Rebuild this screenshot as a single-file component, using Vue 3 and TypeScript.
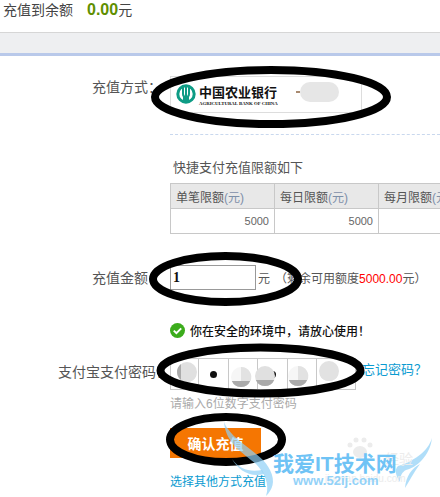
<template>
  <div class="page">
    <div class="balance">
      <span>充值到余额</span>
      <b class="balance-num">0.00</b><span>元</span>
    </div>
    <div class="band"></div>

    <div class="form">
      <div class="row bank-row">
        <span class="label">充值方式：</span>
        <div class="bank-box">
          <svg class="bank-logo" width="20" height="20" viewBox="0 0 20 20">
            <circle cx="10" cy="10" r="8.2" fill="none" stroke="#0e9c85" stroke-width="3" />
            <path d="M7 3v7a3 3 0 0 0 6 0V3M10 2v16" fill="none" stroke="#0e9c85" stroke-width="2" />
            <rect x="7" y="13" width="6" height="4" fill="#0e9c85" />
          </svg>
          <div class="bank-name">
            <div class="bank-cn">中国农业银行</div>
            <div class="bank-en">AGRICULTURAL BANK OF CHINA</div>
          </div>
        </div>
      </div>

      <div class="indent">
        <div class="dashed"></div>
        <div class="tip">快捷支付充值限额如下</div>
        <table class="limits">
          <thead>
            <tr>
              <th v-for="name in limitNames" :key="name">{{ name }}<i>(元)</i></th>
            </tr>
          </thead>
          <tbody>
            <tr>
              <td>5000</td>
              <td>5000</td>
              <td></td>
            </tr>
          </tbody>
        </table>
      </div>

      <div class="row amount-row">
        <span class="label">充值金额：</span>
        <input class="amount" type="text" value="1" />
        <span class="unit">元</span>
        <span class="remain">（剩余可用额度<em>5000.00</em>元）</span>
      </div>

      <div class="indent safe">
        <svg width="15" height="15" viewBox="0 0 15 15">
          <circle cx="7.5" cy="7.5" r="7.5" fill="#3cac1c" />
          <path d="M3.8 7.6l2.6 2.6 4.8-4.8" fill="none" stroke="#fff" stroke-width="2" />
        </svg>
        <span>你在安全的环境中，请放心使用！</span>
      </div>

      <div class="row pin-row">
        <span class="label label-pin">支付宝支付密码：</span>
        <div class="pin">
          <div v-for="n in 6" :key="n" class="pin-cell"><i v-if="n < 6"></i></div>
        </div>
        <a class="forgot">忘记密码？</a>
      </div>

      <div class="indent">
        <div class="hint">请输入6位数字支付密码</div>
        <button class="submit" type="button">确认充值</button>
        <a class="other">选择其他方式充值</a>
      </div>
    </div>

    <!-- hand-drawn marks and censoring over the screenshot -->
    <svg class="marks" width="440" height="497" viewBox="0 0 440 497">
      <rect x="300" y="82" width="39" height="20" rx="10" fill="#e6e6e6" />
      <rect x="296" y="91" width="4" height="2" fill="#a98a70" />
      <g v-for="b in blobs" :key="b.x">
        <circle :cx="b.x" :cy="b.y" r="10" :fill="b.top" />
        <path :d="`M${b.x - 9.2} ${b.y + 4}A10 10 0 0 0 ${b.x + 9.2} ${b.y + 4}Z`" :fill="b.bottom" />
      </g>
      <path d="M177 372a10 10 0 0 1 4-8v16a10 10 0 0 1-4-8z" fill="#aaa" />
      <path d="M241 367a10 10 0 0 1 9.5 14h-9.5z" fill="#e2e2e2" />
      <path d="M298 366a10 10 0 0 1 9.5 14h-9.5z" fill="#e2e2e2" />
      <ellipse class="ring" cx="271" cy="97" rx="116" ry="27" />
      <ellipse class="ring" cx="225.5" cy="279" rx="72.5" ry="23" />
      <ellipse class="ring" cx="260.5" cy="370.5" rx="100" ry="23" />
      <ellipse class="ring" cx="226" cy="439.5" rx="56" ry="22.5" />
      <g class="wing">
        <path d="M224 422C232 442 262 452 270 470C276 482 272 490 266 496C270 484 264 472 256 464C242 452 226 444 224 422Z" />
        <path d="M232 459C240 470 250 472 262 470L264 474C250 478 238 470 232 459Z" />
        <path d="M432 438C428 452 412 462 398 466C394 470 396 476 400 482C400 476 402 472 406 470C416 468 430 456 432 438Z" />
        <path d="M420 464C412 468 406 476 405 488C410 480 414 472 420 464Z" />
      </g>
      <g class="paw">
        <ellipse cx="360" cy="452" rx="7" ry="6" />
        <circle cx="350" cy="445" r="2.5" />
        <circle cx="356" cy="440" r="2.5" />
        <circle cx="364" cy="440" r="2.5" />
        <circle cx="370" cy="445" r="2.5" />
      </g>
    </svg>
    <div class="wm-baidu">经验</div>
    <div class="wm-baidu-url">jingyan.baidu.com</div>
    <div class="wm-title">我爱IT技术网</div>
    <div class="wm-url">www.52ij.com</div>
  </div>
</template>

<script setup lang="ts">
interface Blob {
  x: number;
  y: number;
  top: string;
  bottom: string;
}

const limitNames: string[] = ['单笔限额', '每日限额', '每月限额'];

const blobs: Blob[] = [
  { x: 187, y: 372, top: '#e0e0e0', bottom: '#e0e0e0' },
  { x: 241, y: 377, top: '#f6f6f6', bottom: '#aaaaaa' },
  { x: 265, y: 376, top: '#e0e0e0', bottom: '#aaaaaa' },
  { x: 298, y: 376, top: '#f6f6f6', bottom: '#aaaaaa' },
  { x: 329, y: 371, top: '#e2e2e2', bottom: '#e2e2e2' }
];
</script>

<style>
html,
body {
  margin: 0;
  background: #fff;
  overflow: hidden;
}
</style>

<style scoped>
.page {
  position: relative;
  width: 440px;
  height: 497px;
  overflow: hidden;
  background: #fff;
  color: #555;
  font-family: "Liberation Sans", "Noto Sans CJK SC", sans-serif;
  font-size: 14px;
}

.balance {
  height: 32px;
  padding-left: 3px;
  line-height: 20px;
  color: #444;
}

.balance-num {
  margin-left: 14px;
  font-size: 16px;
  color: #5f8f00;
}

.band {
  height: 20px;
  background: #eeeff1;
  border-top: 1px solid #d6d6d6;
  border-bottom: 3px solid #b9c9ea;
}

.row {
  display: flex;
  align-items: flex-start;
}

.label {
  flex: none;
  width: 162px;
  margin-right: 8px;
  text-align: right;
  line-height: 22px;
  color: #555;
}

.label-pin {
  width: 170px;
  margin-right: 0;
}

.indent {
  padding-left: 170px;
}

.bank-row {
  padding-top: 20px;
}

.bank-box {
  box-sizing: border-box;
  display: flex;
  align-items: flex-start;
  width: 192px;
  height: 37px;
  padding: 7px 0 0 5px;
  border: 1px solid #ddd;
}

.bank-logo {
  flex: none;
}

.bank-name {
  margin-left: 3px;
  color: #111;
}

.bank-cn {
  font-family: "Noto Sans CJK SC", sans-serif;
  font-size: 13px;
  font-weight: 700;
  line-height: 16px;
}

.bank-en {
  font-family: "Liberation Serif", serif;
  font-size: 4.8px;
  font-weight: 700;
  line-height: 8px;
  white-space: nowrap;
}

.dashed {
  margin-top: 21px;
  border-top: 1px dashed #c9d8ee;
}

.tip {
  margin: 24px 0 7px 3px;
  font-size: 13px;
  line-height: 17px;
  color: #555;
}

.limits {
  table-layout: fixed;
  width: 310px;
  border-collapse: collapse;
  font-size: 12px;
}

.limits th,
.limits td {
  box-sizing: border-box;
  width: 104px;
  height: 25px;
  border: 1px solid #c8c8c8;
  white-space: nowrap;
  overflow: hidden;
}

.limits th {
  padding: 0 0 0 5px;
  background: #e8e8e8;
  font-weight: 400;
  text-align: left;
  color: #555;
}

.limits th i {
  font-style: normal;
  color: #7d8fa8;
}

.limits td {
  padding: 0 5px 0 0;
  font-size: 11px;
  text-align: right;
  color: #666;
}

.amount-row {
  margin-top: 31px;
  align-items: center;
}

.amount {
  box-sizing: border-box;
  width: 86px;
  height: 25px;
  padding: 0 2px;
  border: 1px solid #999;
  outline: none;
  font-family: "Liberation Serif", serif;
  font-size: 14px;
  font-weight: 700;
  color: #111;
}

.unit {
  margin-left: 2px;
  font-size: 12px;
}

.remain {
  margin-left: 5px;
  font-size: 12px;
}

.remain em {
  font-style: normal;
  color: #f00;
}

.safe {
  display: flex;
  align-items: center;
  gap: 5px;
  height: 18px;
  margin-top: 31px;
  font-size: 12px;
  font-weight: 500;
  color: #111;
}

.pin-row {
  margin-top: 19px;
}

.pin-row .label {
  margin-top: 3px;
}

.pin {
  box-sizing: border-box;
  display: flex;
  width: 186px;
  height: 32px;
  border: 1px solid #c8c8c8;
}

.pin-cell {
  flex: none;
  box-sizing: border-box;
  display: flex;
  align-items: center;
  justify-content: center;
  width: 29.5px;
  border-right: 1px solid #c8c8c8;
}

.pin-cell:first-child {
  width: 28px;
}

.pin-cell:last-child {
  flex: 1;
  border-right: none;
}

.pin-cell i {
  width: 7px;
  height: 7px;
  border-radius: 50%;
  background: #111;
}

.forgot {
  margin: 3px 0 0 6px;
  font-size: 13px;
  line-height: 18px;
  color: #0a9bd1;
}

.hint {
  margin-top: 6px;
  font-size: 12px;
  line-height: 16px;
  color: #aaa;
}

.submit {
  display: block;
  width: 91px;
  height: 30px;
  margin-top: 16px;
  padding: 0;
  border: none;
  background: #f57602;
  font-family: inherit;
  font-size: 14px;
  font-weight: 700;
  color: #fff;
}

.other {
  display: block;
  margin-top: 16px;
  font-size: 12px;
  line-height: 16px;
  color: #0a9bd1;
}

.marks {
  position: absolute;
  top: 0;
  left: 0;
}

.ring {
  fill: none;
  stroke: #000;
  stroke-width: 8;
}

.wing path {
  fill: #8fd0f6;
  opacity: 0.7;
}

.paw {
  fill: #ececec;
}

.wm-title,
.wm-url,
.wm-baidu,
.wm-baidu-url {
  position: absolute;
  white-space: nowrap;
}

.wm-title {
  top: 451px;
  left: 273px;
  font-size: 21px;
  font-weight: 700;
  line-height: 26px;
  color: #6fc3f5;
}

.wm-url {
  top: 473px;
  left: 293px;
  font-size: 13px;
  font-weight: 700;
  line-height: 16px;
  color: #93d2f8;
}

.wm-baidu {
  top: 450px;
  left: 385px;
  font-size: 14px;
  line-height: 18px;
  color: #ececec;
}

.wm-baidu-url {
  top: 473px;
  left: 325px;
  font-size: 10px;
  line-height: 12px;
  color: #ececec;
}
</style>
